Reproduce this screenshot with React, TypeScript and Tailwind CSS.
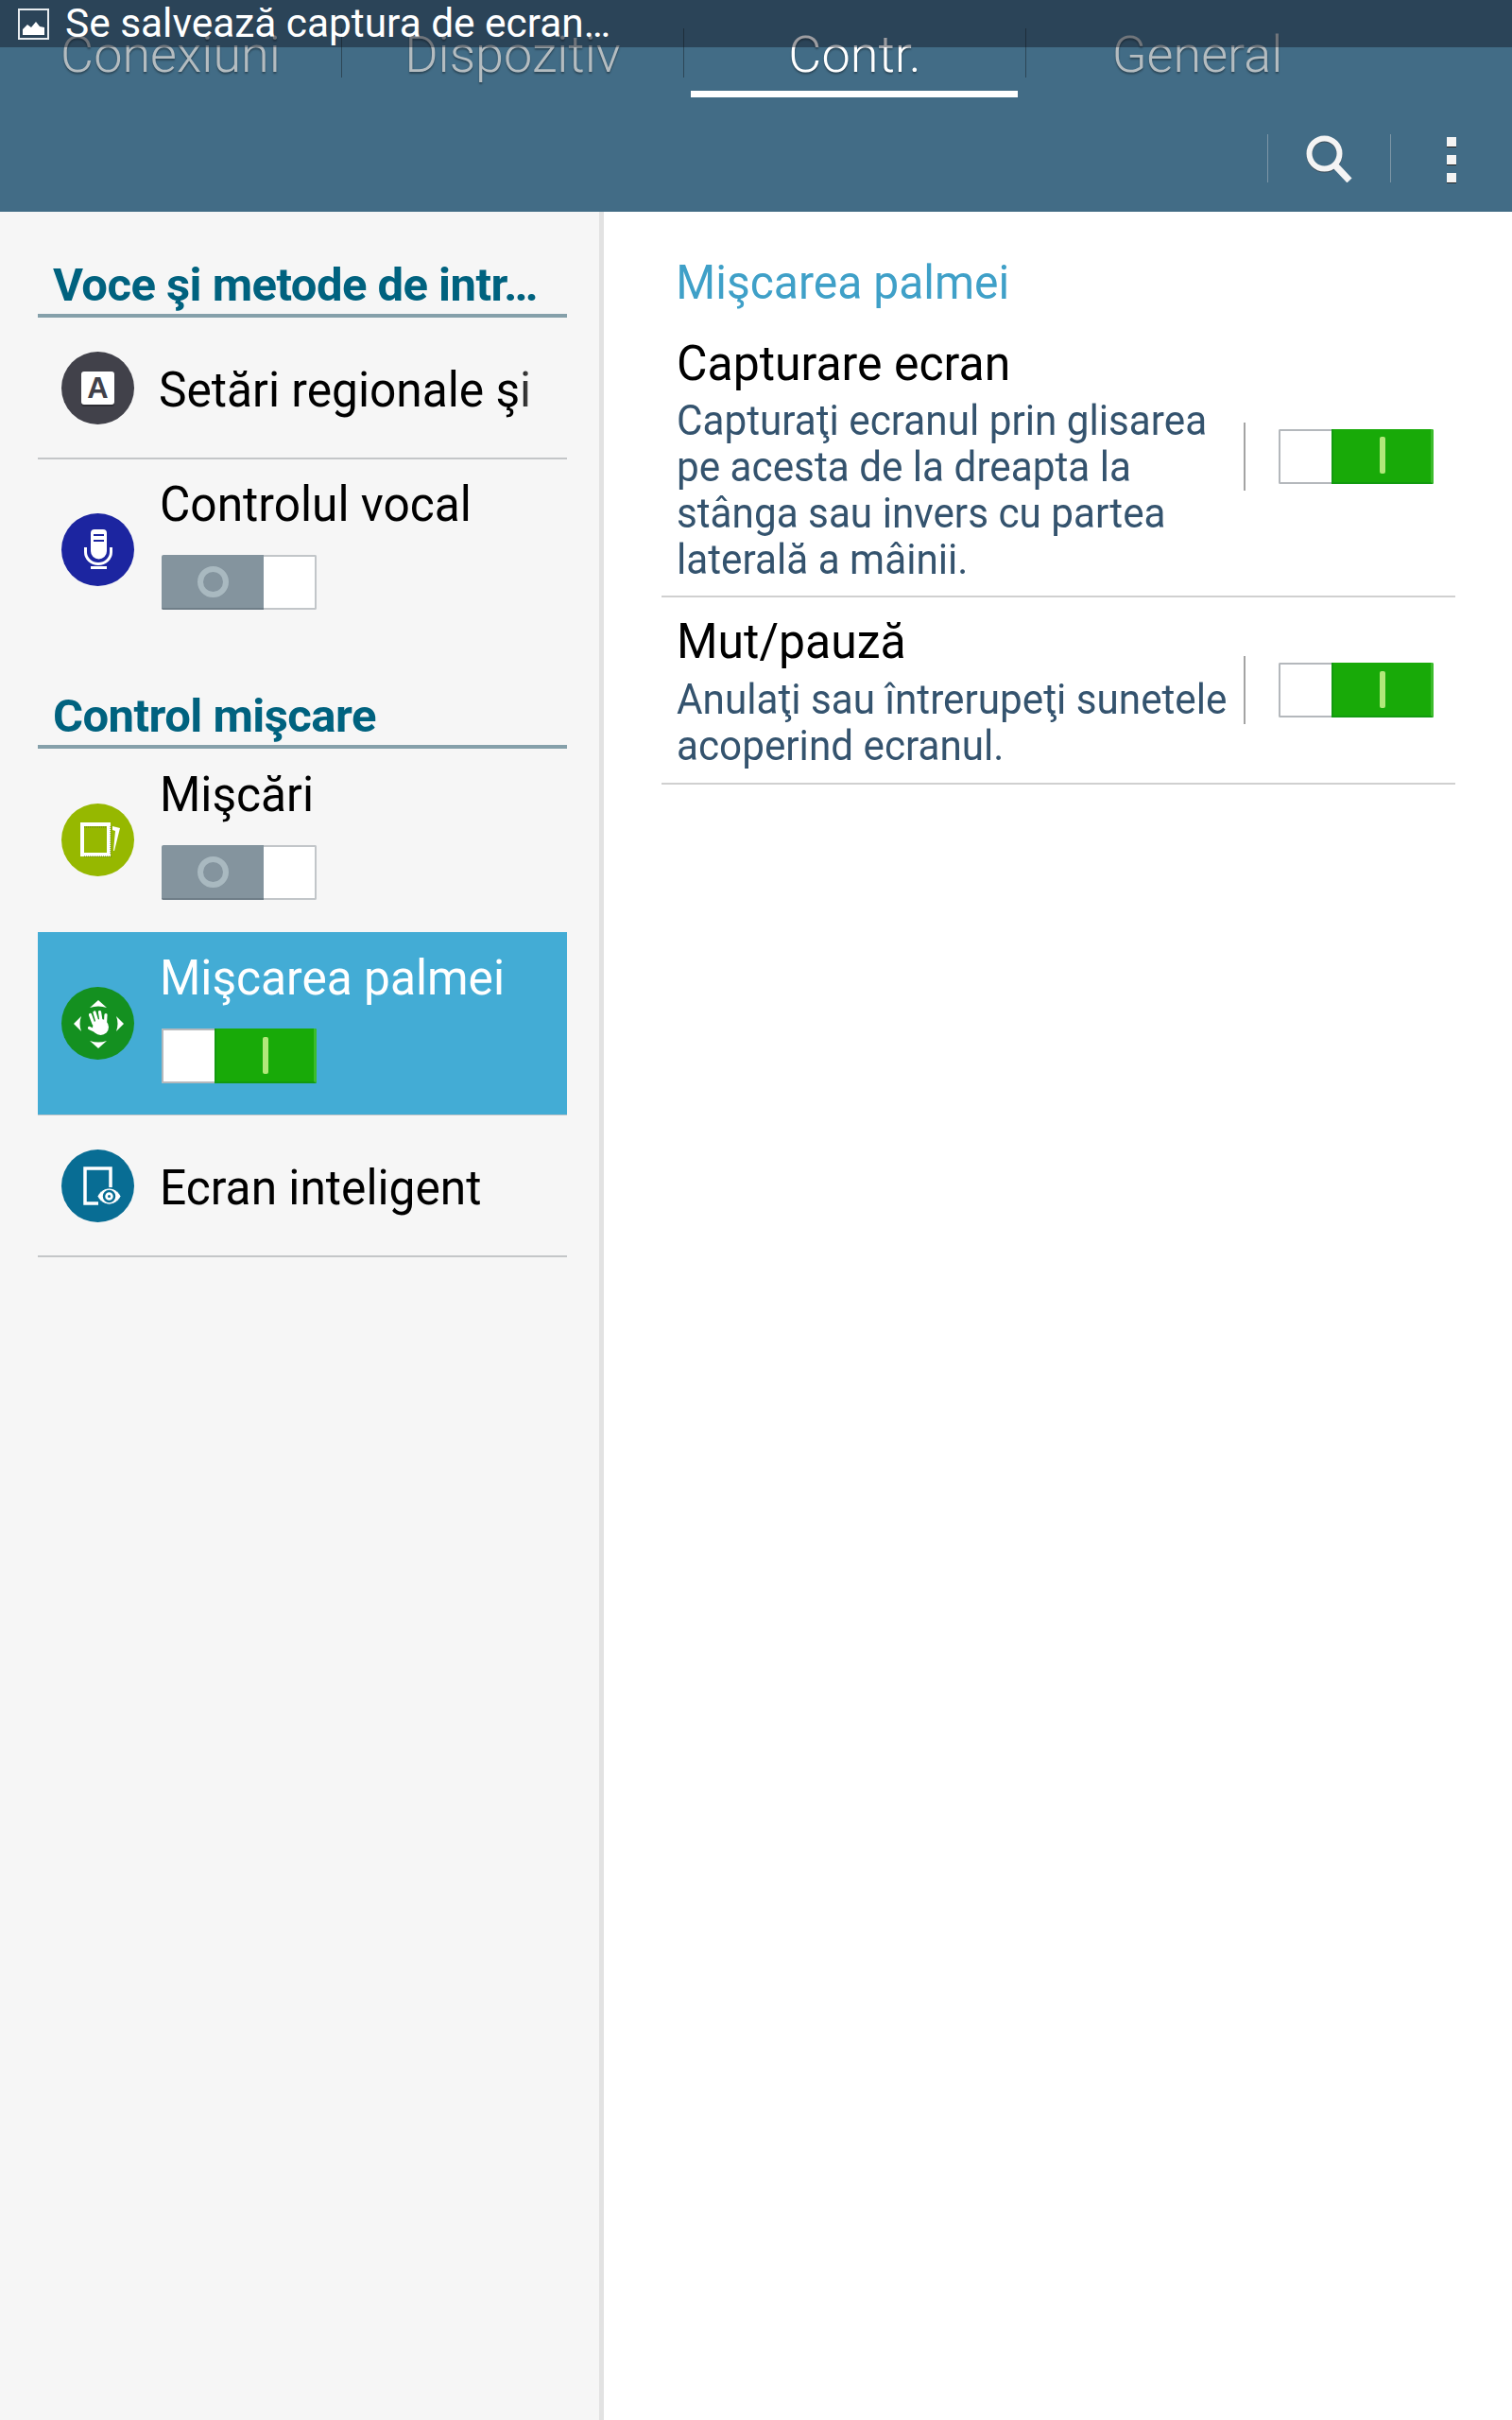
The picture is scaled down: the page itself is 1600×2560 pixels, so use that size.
import React from "react";

const tabs = [
  { label: "Conexiuni", active: false },
  { label: "Dispozitiv", active: false },
  { label: "Contr.", active: true },
  { label: "General", active: false },
];

const Toggle = ({ on }: { on: boolean }) =>
  on ? (
    <div className="flex w-[164px] h-[58px] shrink-0 rounded-[2px] overflow-hidden">
      <div className="w-[56px] bg-white border-2 border-r-0 border-[#b4b8bc]" />
      <div className="flex-1 flex items-center justify-center bg-[#18aa08] border-l-2 border-l-[#129a10] border-r-[3px] border-r-[#3cbc2c] border-b-2 border-b-[#129a10]">
        <div className="w-[6px] h-[39px] rounded-[2px] bg-[#b2e87a]" />
      </div>
    </div>
  ) : (
    <div className="flex w-[164px] h-[58px] shrink-0 rounded-[2px] overflow-hidden">
      <div className="w-[108px] flex items-center justify-center bg-[#84949e] border-b-2 border-b-[#6f7e88]">
        <div className="w-[33px] h-[33px] rounded-full border-[6px] border-[#a9b9c0]" />
      </div>
      <div className="flex-1 bg-white border-2 border-l-0 border-[#c2c6c9]" />
    </div>
  );

const IconCircle = ({ color, children }: { color: string; children: React.ReactNode }) => (
  <div className={`relative w-[77px] h-[77px] rounded-full shrink-0 flex items-center justify-center ${color}`}>{children}</div>
);

const KeyboardIcon = () => (
  <div className="w-[35px] h-[35px] rounded-[3px] bg-white flex items-center justify-center font-['Liberation_Sans',sans-serif] font-bold text-[31px] leading-none text-[#41414a] shadow-[0_2px_0_#2e2e35]">
    A
  </div>
);

const MicIcon = () => (
  <svg viewBox="0 0 77 77" className="w-[77px] h-[77px]">
    <path d="M31 21a4 4 0 0 1 4-4h9a4 4 0 0 1 4 4v14H31z" fill="#fff" />
    <path d="M34 23h11M34 29h11" stroke="#1c25a0" strokeWidth="2" />
    <path d="M31 35h17v5a8.500 8.500 0 0 1-17 0z" fill="#fff" />
    <path d="M25.500 36v5a13.500 12.500 0 0 0 27 0v-5" fill="none" stroke="#fff" strokeWidth="3" />
    <rect x="31" y="56" width="17" height="3" fill="#fff" />
  </svg>
);

const MotionIcon = () => (
  <svg viewBox="0 0 77 77" className="w-[77px] h-[77px]">
    <rect x="22" y="22" width="28" height="32" fill="none" stroke="#fff" strokeWidth="4" />
    <path d="M24 25h24M24 56h30M52 24v30" stroke="#5d7d20" strokeWidth="1" strokeDasharray="1 1" fill="none" />
    <path d="M54 24l8 2-6 24-1 0 2-21-3-1z" fill="#fff" />
  </svg>
);

const PalmIcon = () => (
  <svg viewBox="0 0 77 77" className="w-[77px] h-[77px]">
    <path d="M30 22l9-8 9 8c-6-2-12-2-18 0z" fill="#fff" />
    <path d="M30 57c6 2 12 2 18 0l-9 8z" fill="#fff" />
    <path d="M21 31l-8 8 8 8c-2-5-2-11 0-16z" fill="#fff" />
    <path d="M58 31l8 8-8 8c2-5 2-11 0-16z" fill="#fff" />
    <ellipse cx="41.500" cy="42.500" rx="8.500" ry="8.500" fill="#fff" />
    <path d="M34 39l-3.500-9.500M38 37l-3-10M42 36l-1.500-9.500M46.500 38l.5-8.500M37 47l-7.500-3.500" fill="none" stroke="#fff" strokeWidth="3.200" strokeLinecap="round" />
  </svg>
);

const SmartIcon = () => (
  <svg viewBox="0 0 77 77" className="w-[77px] h-[77px]">
    <path d="M39 57H25V20h27v20" fill="none" stroke="#fff" strokeWidth="3.500" />
    <path d="M38 49.500c6-11.500 19-11.500 25 0-6 11.500-19 11.500-25 0z" fill="#fff" stroke="#086d94" strokeWidth="1" />
    <circle cx="50.500" cy="49.500" r="5.500" fill="#fff" stroke="#086d94" strokeWidth="2.500" />
    <circle cx="50.500" cy="49.500" r="1.500" fill="#086d94" />
  </svg>
);

const CategoryHeader = ({ title }: { title: string }) => (
  <div className="h-[112px] flex items-end border-b-4 border-[#85a0aa] pl-4">
    <span className="font-bold text-[49px] leading-[60px] tracking-[-0.55px] text-[#00627f] whitespace-nowrap">{title}</span>
  </div>
);

export default function App() {
  return (
    <div className="relative w-[1600px] h-[2560px] overflow-hidden bg-white font-['Roboto',sans-serif]">
      {/* Action bar with tabs */}
      <header className="h-[224px] bg-[#426c86] flex flex-col">
        <div className="flex pt-[30px]">
          {tabs.map((t, i) => (
            <div key={t.label} className={`relative w-[362px] h-[52px] flex items-center justify-center ${i < 3 ? "border-r border-[#2c4656]" : ""}`}>
              <span
                className={`font-light text-[54px] leading-none pt-[4px] whitespace-nowrap [text-shadow:0_2px_2px_rgba(0,0,0,0.35)] ${t.active ? "text-white" : "text-[#b4bcc0]"}`}
              >
                {t.label}
              </span>
              {t.active && <div className="absolute left-[7px] right-[8px] top-[66px] h-[7px] bg-white" />}
            </div>
          ))}
        </div>
        <div className="flex justify-end items-start pt-[60px] pr-[59px]">
          <div className="w-px h-[51px] bg-[#7d96a6]" />
          <div className="w-[129px] flex justify-center pt-[1px]">
            <svg viewBox="0 0 50 50" className="w-[50px] h-[50px]">
              <circle cx="19.500" cy="20.500" r="16" fill="none" stroke="#3a4a55" strokeWidth="6" />
              <circle cx="19.500" cy="19.500" r="16" fill="none" stroke="#f4f4f4" strokeWidth="6" />
              <path d="M30 31l16 17" stroke="#f4f4f4" strokeWidth="7" />
            </svg>
          </div>
          <div className="w-px h-[51px] bg-[#7d96a6]" />
          <div className="ml-[59px] flex flex-col gap-[8px] pt-[3px]">
            <div className="w-[10px] h-[11px] bg-[#f4f4f4] border-b border-[#222]" />
            <div className="w-[10px] h-[11px] bg-[#f4f4f4] border-b border-[#222]" />
            <div className="w-[10px] h-[11px] bg-[#f4f4f4] border-b border-[#222]" />
          </div>
        </div>
      </header>

      {/* Status bar over the tabs */}
      <div className="absolute top-0 left-0 w-full h-[50px] bg-[#0a0a14]/40 flex items-center pl-[19px]">
        <svg viewBox="0 0 33 33" className="w-[33px] h-[33px]">
          <rect x="1" y="1" width="31" height="31" fill="none" stroke="#e8ecef" strokeWidth="2" />
          <path d="M5 28v-6l5-5 4 3 5-6 4 5 5 1v8z" fill="#fff" />
        </svg>
        <span className="ml-[17px] text-[42.4px] leading-none text-white whitespace-nowrap">Se salvează captura de ecran…</span>
      </div>

      <main className="flex h-[2336px]">
        {/* Left list */}
        <aside className="w-[639px] bg-[#f6f6f6] border-r-[5px] border-[#e2e2e2] px-[40px] shrink-0">
          <div className="w-[560px]">
            <CategoryHeader title="Voce şi metode de intr…" />
            <div className="h-[150px] flex items-center pl-[25px] border-b-2 border-[#c4c6c8]">
              <IconCircle color="bg-[#41414a]">
                <KeyboardIcon />
              </IconCircle>
              <span className="ml-[26px] mt-[5px] w-[430px] shrink-0 origin-left scale-x-[0.955] overflow-hidden whitespace-nowrap text-[52px] leading-[60px] text-black [mask-image:linear-gradient(to_right,black_93%,transparent_100%)]">
                Setări regionale şi introducere
              </span>
            </div>
            <div className="h-[194px] flex items-center pl-[25px]">
              <div className="mb-[4px]">
                <IconCircle color="bg-[#1c25a0]">
                  <MicIcon />
                </IconCircle>
              </div>
              <div className="ml-[29px] self-start pt-[18px] flex flex-col gap-[23px]">
                <span className="origin-left scale-x-[0.955] text-[52px] leading-[60px] text-black -ml-[2px] whitespace-nowrap">Controlul vocal</span>
                <Toggle on={false} />
              </div>
            </div>

            <CategoryHeader title="Control mişcare" />
            <div className="h-[194px] flex items-center pl-[25px]">
              <div className="mb-[1px]">
                <IconCircle color="bg-[#96b800]">
                  <MotionIcon />
                </IconCircle>
              </div>
              <div className="ml-[29px] self-start pt-[19px] flex flex-col gap-[23px]">
                <span className="origin-left scale-x-[0.955] text-[52px] leading-[60px] text-black -ml-[2px] whitespace-nowrap">Mişcări</span>
                <Toggle on={false} />
              </div>
            </div>
            <div className="h-[194px] flex items-center pl-[25px] bg-[#43acd5] border-b border-[#c4c6c8]">
              <IconCircle color="bg-[#149020]">
                <PalmIcon />
              </IconCircle>
              <div className="ml-[29px] self-start pt-[19px] flex flex-col gap-[23px]">
                <span className="origin-left scale-x-[0.955] text-[52px] leading-[60px] text-white -ml-[2px] whitespace-nowrap">Mişcarea palmei</span>
                <Toggle on />
              </div>
            </div>
            <div className="h-[150px] flex items-center pl-[25px] border-b-2 border-[#c4c6c8]">
              <IconCircle color="bg-[#086d94]">
                <SmartIcon />
              </IconCircle>
              <span className="ml-[27px] mt-[5px] origin-left scale-x-[0.955] text-[52px] leading-[60px] text-black whitespace-nowrap">Ecran inteligent</span>
            </div>
          </div>
        </aside>

        {/* Right detail pane */}
        <section className="flex-1 min-w-0 pl-[61px] pr-[60px]">
          <div className="h-[111px] pl-4 pt-[45px] origin-left scale-x-[0.96] text-[50px] leading-[60px] text-[#3fa0c8] whitespace-nowrap">Mişcarea palmei</div>
          <div className="h-[297px] flex items-center pl-4 pr-[23px] border-b-2 border-[#d0d0d0]">
            <div className="flex-1 min-w-0 whitespace-nowrap">
              <div className="origin-left scale-x-[0.96] text-[52px] leading-[60px] text-black pt-[6px]">Capturare ecran</div>
              <div className="origin-left scale-x-[0.96] text-[44px] leading-[49px] text-[#34536e] pt-[6px]">
                Capturaţi ecranul prin glisarea
                <br />
                pe acesta de la dreapta la
                <br />
                stânga sau invers cu partea
                <br />
                laterală a mâinii.
              </div>
            </div>
            <div className="w-[2px] h-[72px] bg-[#a4a4a4] mr-[35px]" />
            <Toggle on />
          </div>
          <div className="h-[198px] flex items-center pl-4 pr-[23px] border-b-2 border-[#d0d0d0]">
            <div className="flex-1 min-w-0 whitespace-nowrap">
              <div className="origin-left scale-x-[0.96] text-[52px] leading-[60px] text-black pt-[3px]">Mut/pauză</div>
              <div className="origin-left scale-x-[0.96] text-[44px] leading-[49px] text-[#34536e] pt-[7px]">
                Anulaţi sau întrerupeţi sunetele
                <br />
                acoperind ecranul.
              </div>
            </div>
            <div className="w-[2px] h-[72px] bg-[#a4a4a4] mr-[35px]" />
            <Toggle on />
          </div>
        </section>
      </main>
    </div>
  );
}
